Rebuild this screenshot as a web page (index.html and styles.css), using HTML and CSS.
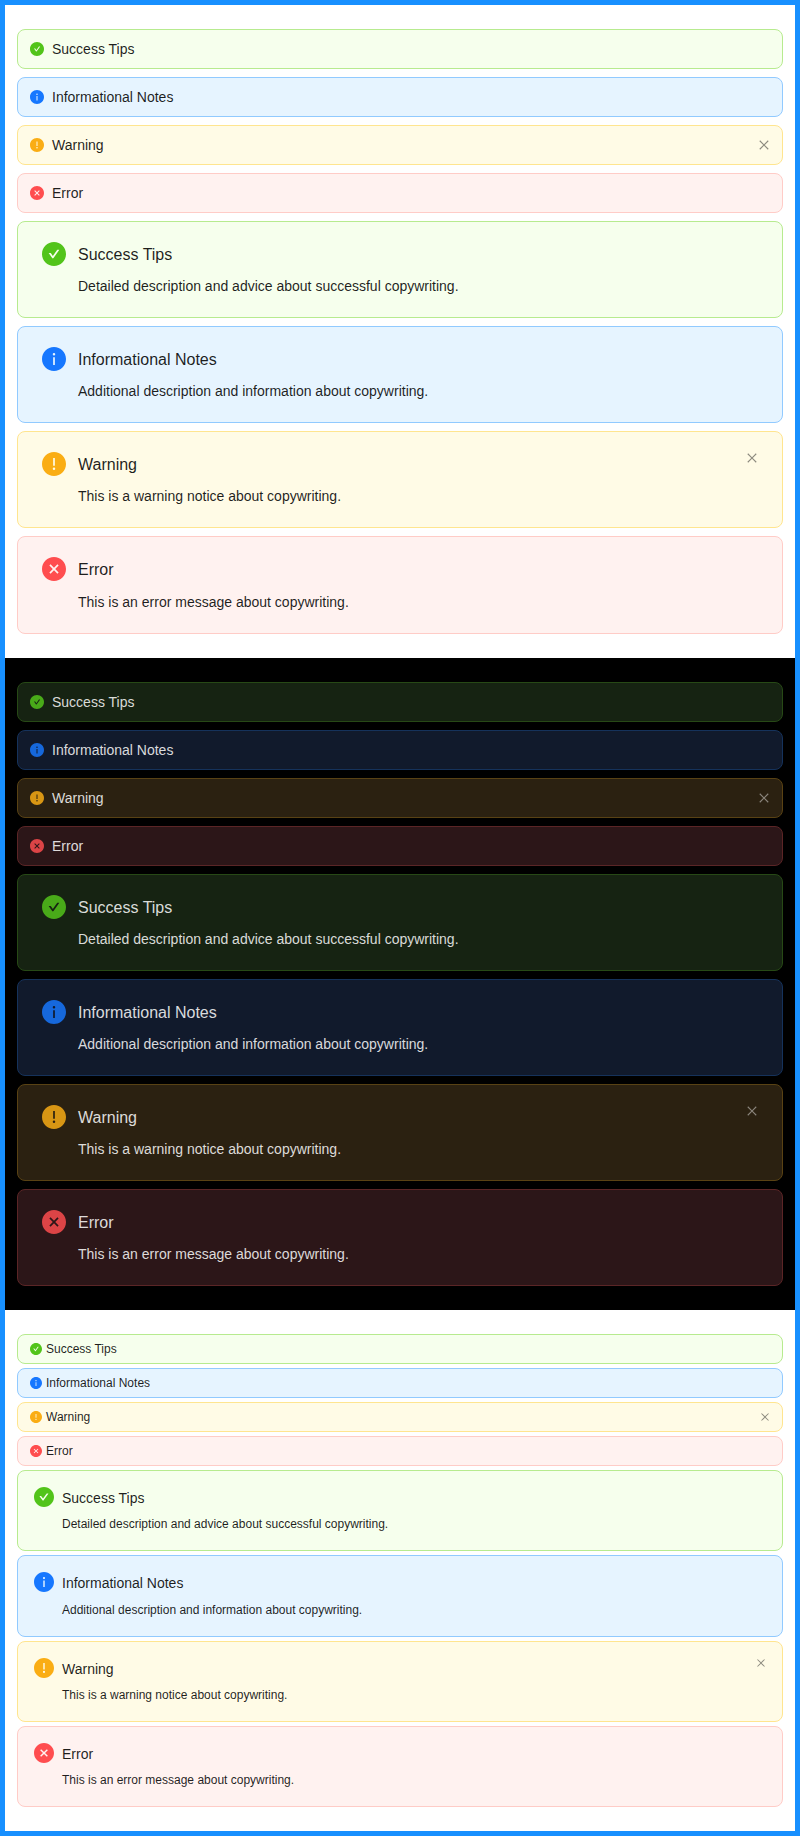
FILE: index.html
```html
<!DOCTYPE html>
<html lang="en">
<head>
<meta charset="utf-8">
<title>Alerts</title>
<link rel="stylesheet" href="styles.css">
</head>
<body>
<svg class="sprite" aria-hidden="true">
  <symbol id="i-success" viewBox="64 64 896 896"><path fill-rule="evenodd" d="M512 64C264.6 64 64 264.6 64 512s200.6 448 448 448 448-200.6 448-448S759.4 64 512 64zm193.5 301.7l-210.6 292a31.8 31.8 0 01-51.7 0L318.5 484.9c-3.8-5.3 0-12.7 6.5-12.7h46.9c10.2 0 19.9 4.9 25.9 13.3l71.2 98.8 157.2-218c6-8.3 15.6-13.3 25.9-13.3H699c6.5 0 10.3 7.4 6.5 12.7z"/></symbol>
  <symbol id="i-info" viewBox="64 64 896 896"><path fill-rule="evenodd" d="M512 64C264.6 64 64 264.6 64 512s200.6 448 448 448 448-200.6 448-448S759.4 64 512 64zm32 664c0 4.4-3.6 8-8 8h-48c-4.4 0-8-3.6-8-8V456c0-4.4 3.6-8 8-8h48c4.4 0 8 3.6 8 8v272zm-32-344a48.01 48.01 0 010-96 48.01 48.01 0 010 96z"/></symbol>
  <symbol id="i-warning" viewBox="64 64 896 896"><path fill-rule="evenodd" d="M512 64C264.6 64 64 264.6 64 512s200.6 448 448 448 448-200.6 448-448S759.4 64 512 64zm-32 232c0-4.4 3.6-8 8-8h48c4.4 0 8 3.6 8 8v272c0 4.4-3.6 8-8 8h-48c-4.4 0-8-3.6-8-8V296zm32 440a48.01 48.01 0 010-96 48.01 48.01 0 010 96z"/></symbol>
  <symbol id="i-error" viewBox="64 64 896 896"><path fill-rule="evenodd" d="M512 64c247.4 0 448 200.6 448 448S759.4 960 512 960 64 759.4 64 512 264.6 64 512 64zM640 338.8L512 466.75 384 338.8 338.8 384 466.75 512 338.8 640 384 685.2 512 557.25 640 685.2 685.2 640 557.25 512 685.2 384z"/></symbol>
  <symbol id="i-close" viewBox="64 64 896 896"><path d="M799.9 166.3L857.7 224.1 569.93 512 857.7 799.9 799.9 857.7 512 569.93 224.1 857.7 166.3 799.9 454.07 512 166.3 224.1 224.1 166.3 512 454.07z"/></symbol>
</svg>
<main class="frame">
  <section class="panel">
    <div class="alert success"><svg class="icon"><use href="#i-success"/></svg><div class="content"><div class="title">Success Tips</div></div></div>
    <div class="alert info"><svg class="icon"><use href="#i-info"/></svg><div class="content"><div class="title">Informational Notes</div></div></div>
    <div class="alert warning"><svg class="icon"><use href="#i-warning"/></svg><div class="content"><div class="title">Warning</div></div><button class="close" aria-label="Close"><svg><use href="#i-close"/></svg></button></div>
    <div class="alert error"><svg class="icon"><use href="#i-error"/></svg><div class="content"><div class="title">Error</div></div></div>
    <div class="alert detailed success"><svg class="icon"><use href="#i-success"/></svg><div class="content"><div class="title">Success Tips</div><div class="description">Detailed description and advice about successful copywriting.</div></div></div>
    <div class="alert detailed info"><svg class="icon"><use href="#i-info"/></svg><div class="content"><div class="title">Informational Notes</div><div class="description">Additional description and information about copywriting.</div></div></div>
    <div class="alert detailed warning"><svg class="icon"><use href="#i-warning"/></svg><div class="content"><div class="title">Warning</div><div class="description">This is a warning notice about copywriting.</div></div><button class="close" aria-label="Close"><svg><use href="#i-close"/></svg></button></div>
    <div class="alert detailed error"><svg class="icon"><use href="#i-error"/></svg><div class="content"><div class="title">Error</div><div class="description">This is an error message about copywriting.</div></div></div>
  </section>
  <section class="panel dark">
    <div class="alert success"><svg class="icon"><use href="#i-success"/></svg><div class="content"><div class="title">Success Tips</div></div></div>
    <div class="alert info"><svg class="icon"><use href="#i-info"/></svg><div class="content"><div class="title">Informational Notes</div></div></div>
    <div class="alert warning"><svg class="icon"><use href="#i-warning"/></svg><div class="content"><div class="title">Warning</div></div><button class="close" aria-label="Close"><svg><use href="#i-close"/></svg></button></div>
    <div class="alert error"><svg class="icon"><use href="#i-error"/></svg><div class="content"><div class="title">Error</div></div></div>
    <div class="alert detailed success"><svg class="icon"><use href="#i-success"/></svg><div class="content"><div class="title">Success Tips</div><div class="description">Detailed description and advice about successful copywriting.</div></div></div>
    <div class="alert detailed info"><svg class="icon"><use href="#i-info"/></svg><div class="content"><div class="title">Informational Notes</div><div class="description">Additional description and information about copywriting.</div></div></div>
    <div class="alert detailed warning"><svg class="icon"><use href="#i-warning"/></svg><div class="content"><div class="title">Warning</div><div class="description">This is a warning notice about copywriting.</div></div><button class="close" aria-label="Close"><svg><use href="#i-close"/></svg></button></div>
    <div class="alert detailed error"><svg class="icon"><use href="#i-error"/></svg><div class="content"><div class="title">Error</div><div class="description">This is an error message about copywriting.</div></div></div>
  </section>
  <section class="panel compact">
    <div class="alert success"><svg class="icon"><use href="#i-success"/></svg><div class="content"><div class="title">Success Tips</div></div></div>
    <div class="alert info"><svg class="icon"><use href="#i-info"/></svg><div class="content"><div class="title">Informational Notes</div></div></div>
    <div class="alert warning"><svg class="icon"><use href="#i-warning"/></svg><div class="content"><div class="title">Warning</div></div><button class="close" aria-label="Close"><svg><use href="#i-close"/></svg></button></div>
    <div class="alert error"><svg class="icon"><use href="#i-error"/></svg><div class="content"><div class="title">Error</div></div></div>
    <div class="alert detailed success"><svg class="icon"><use href="#i-success"/></svg><div class="content"><div class="title">Success Tips</div><div class="description">Detailed description and advice about successful copywriting.</div></div></div>
    <div class="alert detailed info"><svg class="icon"><use href="#i-info"/></svg><div class="content"><div class="title">Informational Notes</div><div class="description">Additional description and information about copywriting.</div></div></div>
    <div class="alert detailed warning"><svg class="icon"><use href="#i-warning"/></svg><div class="content"><div class="title">Warning</div><div class="description">This is a warning notice about copywriting.</div></div><button class="close" aria-label="Close"><svg><use href="#i-close"/></svg></button></div>
    <div class="alert detailed error"><svg class="icon"><use href="#i-error"/></svg><div class="content"><div class="title">Error</div><div class="description">This is an error message about copywriting.</div></div></div>
  </section>
</main>
</body>
</html>
```
FILE: styles.css
```css
* {
  box-sizing: border-box;
}

body {
  margin: 0;
  font-family: "Liberation Sans", Arial, sans-serif;
}

.sprite {
  display: none;
}

.frame {
  border: 5px solid #1890ff;
}

.panel {
  --text: rgba(0, 0, 0, 0.88);
  --close: rgba(0, 0, 0, 0.45);
  --size: 14px;
  --title-size: 16px;
  --icon: 14px;
  --icon-lg: 24px;
  --close-size: 12px;
  --pad: 8px 12px;
  --pad-lg: 20px 24px;
  --icon-gap: 8px;
  --icon-gap-lg: 12px;
  --gap: 8px;
  display: flex;
  flex-direction: column;
  gap: var(--gap);
  padding: 24px 12px;
  background: #fff;
  color: var(--text);
  font-size: var(--size);
  line-height: 1.5714285714;
}

.dark {
  --text: rgba(255, 255, 255, 0.85);
  --close: rgba(255, 255, 255, 0.45);
  background: #000;
}

.compact {
  --size: 12px;
  --title-size: 14px;
  --icon: 12px;
  --icon-lg: 20px;
  --close-size: 10px;
  --pad: 4px 12px;
  --pad-lg: 16px;
  --icon-gap: 4px;
  --icon-gap-lg: 8px;
  --gap: 4px;
  line-height: 1.6666666667;
}

.alert {
  display: flex;
  align-items: center;
  gap: var(--icon-gap);
  padding: var(--pad);
  border: 1px solid var(--line);
  border-radius: 8px;
  background: var(--fill);
}

.icon {
  flex: none;
  width: var(--icon);
  height: var(--icon);
  fill: var(--accent);
}

.content {
  flex: 1;
  min-width: 0;
}

.close {
  flex: none;
  display: flex;
  padding: 0;
  border: 0;
  background: transparent;
}

.close svg {
  width: var(--close-size);
  height: var(--close-size);
  fill: var(--close);
}

.detailed {
  align-items: flex-start;
  gap: var(--icon-gap-lg);
  padding: var(--pad-lg);
}

.detailed .icon {
  width: var(--icon-lg);
  height: var(--icon-lg);
}

.detailed .title {
  margin-bottom: var(--gap);
  font-size: var(--title-size);
}

.success { --fill: #f6ffed; --line: #b7eb8f; --accent: #52c41a; }
.info { --fill: #e6f4ff; --line: #91caff; --accent: #1677ff; }
.warning { --fill: #fffbe6; --line: #ffe58f; --accent: #faad14; }
.error { --fill: #fff2f0; --line: #ffccc7; --accent: #ff4d4f; }

.dark .success { --fill: #162312; --line: #274916; --accent: #49aa19; }
.dark .info { --fill: #111a2c; --line: #15325b; --accent: #1668dc; }
.dark .warning { --fill: #2b2111; --line: #594214; --accent: #d89614; }
.dark .error { --fill: #2c1618; --line: #5b2526; --accent: #dc4446; }
```
